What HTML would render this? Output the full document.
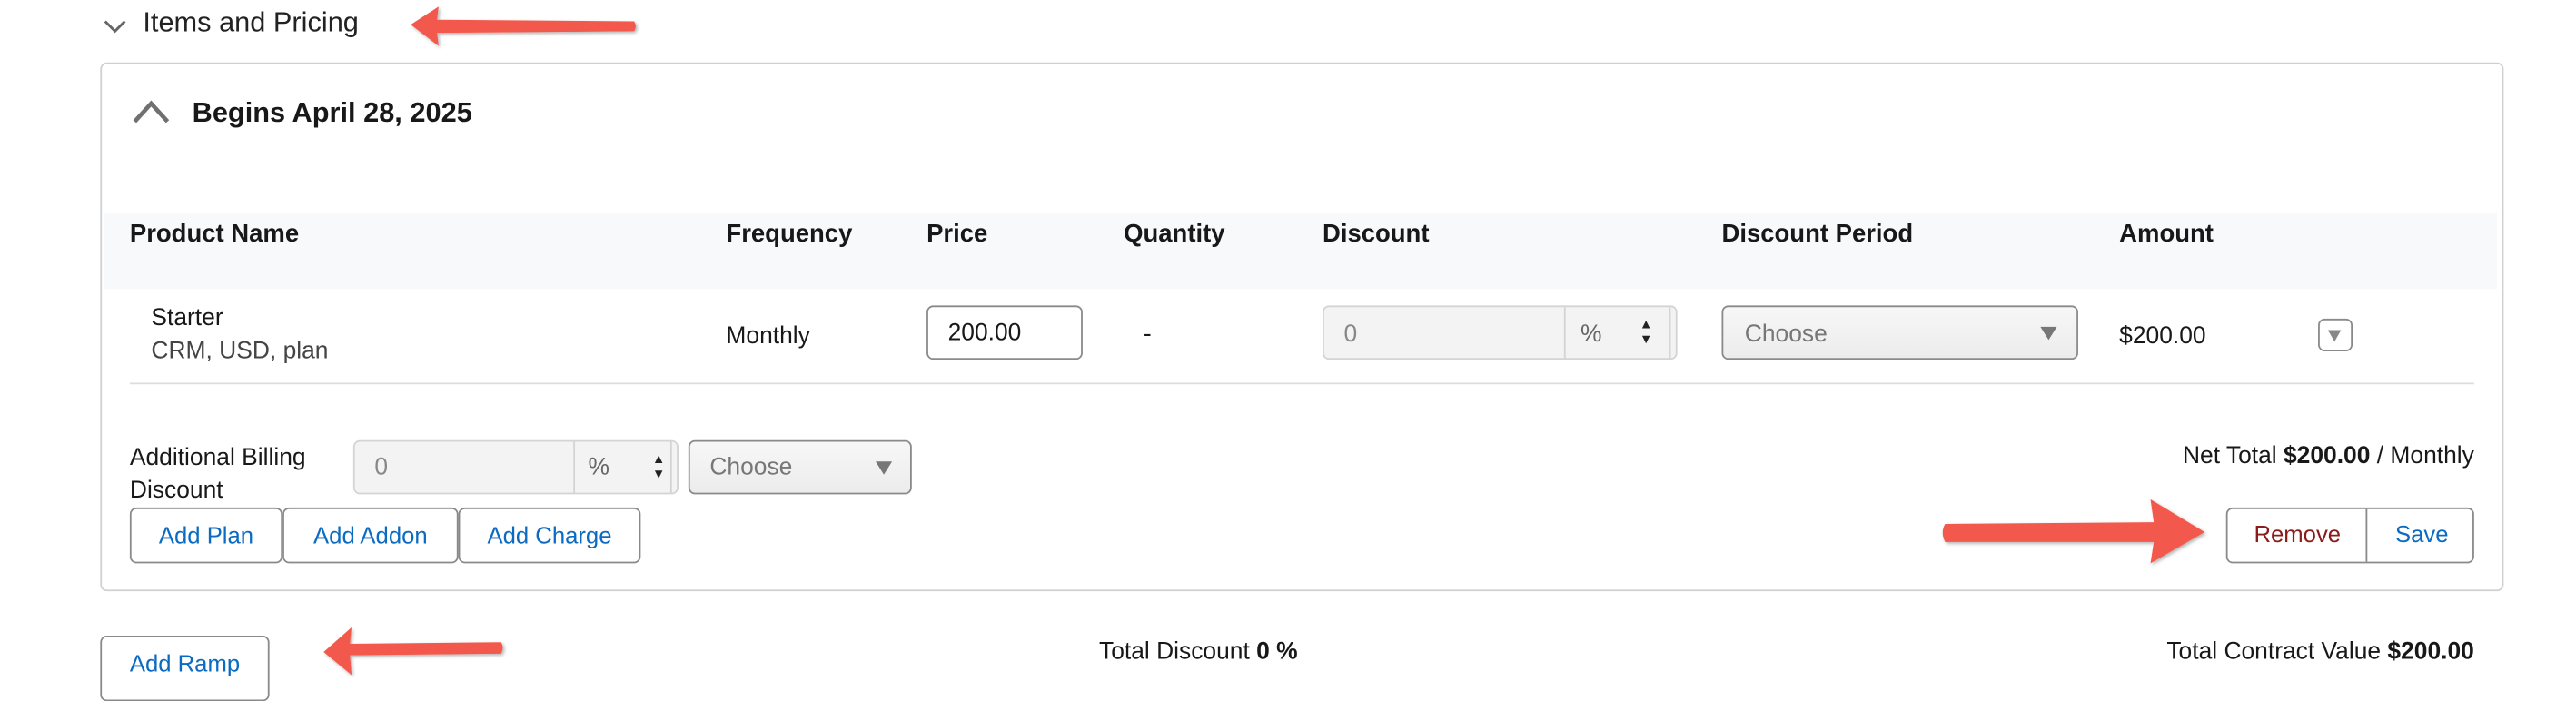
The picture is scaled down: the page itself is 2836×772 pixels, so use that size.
<!DOCTYPE html>
<html><head><meta charset="utf-8"><style>
html,body{margin:0;padding:0;background:#fff;width:2836px;height:750px;overflow:hidden}
#w{position:absolute;left:0;top:0;width:1568px;height:415px;transform:scale(1.80867);transform-origin:0 0;font-family:"Liberation Sans",sans-serif;color:#181818;font-size:14.6px}
.a{position:absolute;white-space:nowrap}
.b{font-weight:bold}
.h{font-weight:bold;font-size:15.2px;top:134px}
.box{position:absolute;box-sizing:border-box;border:1px solid #8a8a8a;border-radius:4px;background:#fff}
.gbox{position:absolute;box-sizing:border-box;border:1px solid #d4d4d4;border-radius:4px;background:#f3f3f3}
.btn{position:absolute;box-sizing:border-box;border:1px solid #8a8a8a;border-radius:4px;background:#fff;color:#0b6bc2;text-align:center;font-size:14.2px}
.sel{position:absolute;box-sizing:border-box;border:1px solid #8a8a8a;border-radius:4px;background:linear-gradient(#f7f7f7,#ececec);color:#777}
.tri{position:absolute;width:0;height:0;border-left:5px solid transparent;border-right:5px solid transparent;border-top:8px solid #777}
</style></head><body><div id="w">
<svg class="a" style="left:62px;top:10px" width="16" height="12"><path d="M2 3 L8 9 L14 3" fill="none" stroke="#666" stroke-width="1.6"/></svg>
<div class="a" style="left:87px;top:4px;font-size:17px;color:#222">Items and Pricing</div>
<svg class="a" style="left:245px;top:2px" width="150" height="28"><g filter="url(#s)"><path d="M5 13 L22 2 L21 10 L141 11 Q143 14 141 17 L21 18 L22 26 Z" fill="#f2594b"/></g><defs><filter id="s"><feDropShadow dx="1" dy="1" stdDeviation="1" flood-opacity=".3"/></filter></defs></svg>

<div style="position:absolute;left:61px;top:38px;width:1463px;height:322px;box-sizing:border-box;border:1px solid #d0d0d0;border-radius:4px"></div>
<svg class="a" style="left:79px;top:59px" width="26" height="18"><path d="M3 15 L13 4 L23 15" fill="none" stroke="#707070" stroke-width="2.6"/></svg>
<div class="a b" style="left:117px;top:59px;font-size:17px">Begins April 28, 2025</div>

<div class="a" style="left:63px;top:130px;width:1457px;height:46px;background:#f8f9fa"></div>
<div class="a h" style="left:79px">Product Name</div>
<div class="a h" style="left:442px">Frequency</div>
<div class="a h" style="left:564px">Price</div>
<div class="a h" style="left:684px">Quantity</div>
<div class="a h" style="left:805px">Discount</div>
<div class="a h" style="left:1048px">Discount Period</div>
<div class="a h" style="left:1290px">Amount</div>

<div class="a" style="left:92px;top:186px">Starter</div>
<div class="a" style="left:92px;top:206px;color:#444">CRM, USD, plan</div>
<div class="a" style="left:442px;top:197px">Monthly</div>
<div class="box" style="left:564px;top:186px;width:95px;height:33px"></div>
<div class="a" style="left:577px;top:195px">200.00</div>
<div class="a" style="left:696px;top:196px">-</div>
<div class="gbox" style="left:805px;top:186px;width:216px;height:33px"></div>
<div class="a" style="left:952px;top:187px;width:1px;height:31px;background:#d4d4d4"></div>
<div class="a" style="left:1016px;top:187px;width:1px;height:31px;background:#d4d4d4"></div>
<div class="a" style="left:818px;top:196px;color:#888">0</div>
<div class="a" style="left:962px;top:196px;color:#666">%</div>
<div class="a" style="left:998px;top:193px;font-size:8px;line-height:9px;color:#222">▲<br>▼</div>
<div class="sel" style="left:1048px;top:186px;width:217px;height:33px"></div>
<div class="a" style="left:1062px;top:196px;color:#777">Choose</div>
<div class="tri" style="left:1242px;top:199px"></div>
<div class="a" style="left:1290px;top:197px">$200.00</div>
<div class="box" style="left:1411px;top:194px;width:21px;height:20px;border-radius:4px"></div>
<div class="tri" style="left:1417px;top:201px;border-width:7px 4px 0 4px;border-top-color:#888"></div>
<div class="a" style="left:79px;top:233px;width:1427px;height:1px;background:#ddd"></div>

<div class="a" style="left:79px;top:269px;line-height:20px">Additional Billing<br>Discount</div>
<div class="gbox" style="left:215px;top:268px;width:198px;height:33px"></div>
<div class="a" style="left:349px;top:269px;width:1px;height:31px;background:#d4d4d4"></div>
<div class="a" style="left:408px;top:269px;width:1px;height:31px;background:#d4d4d4"></div>
<div class="a" style="left:228px;top:277px;color:#888">0</div>
<div class="a" style="left:358px;top:277px;color:#666">%</div>
<div class="a" style="left:397px;top:275px;font-size:8px;line-height:9px;color:#222">▲<br>▼</div>
<div class="sel" style="left:419px;top:268px;width:136px;height:33px"></div>
<div class="a" style="left:432px;top:277px;color:#777">Choose</div>
<div class="tri" style="left:533px;top:281px"></div>
<div class="a" style="right:62px;top:270px">Net Total <b>$200.00</b> / Monthly</div>

<div class="btn" style="left:79px;top:309px;width:93px;height:34px;line-height:34px">Add Plan</div>
<div class="btn" style="left:172px;top:309px;width:107px;height:34px;line-height:34px">Add Addon</div>
<div class="btn" style="left:279px;top:309px;width:111px;height:34px;line-height:34px">Add Charge</div>

<div class="btn" style="left:1355px;top:309px;width:151px;height:34px"></div>
<div class="a" style="left:1440px;top:310px;width:1px;height:32px;background:#8a8a8a"></div>
<div class="a" style="left:1372px;top:318px;color:#8a1c1c;font-size:14.2px">Remove</div>
<div class="a" style="left:1458px;top:318px;color:#0b6bc2;font-size:14.2px">Save</div>
<svg class="a" style="left:1178px;top:301px" width="170" height="46"><g filter="url(#s)"><path d="M6 18 L133 17 L131 3 L164 23 L131 42 L133 29 L6 29 Q3 23 6 18 Z" fill="#f2594b"/></g></svg>

<div class="btn" style="left:61px;top:387px;width:103px;height:40px;line-height:34px">Add Ramp</div>
<svg class="a" style="left:192px;top:378px" width="120" height="38"><g filter="url(#s)"><path d="M5 19 L22 4 L21 14 L113 13 Q115 16 113 20 L21 21 L22 33 Z" fill="#f2594b"/></g></svg>
<div class="a" style="left:669px;top:389px">Total Discount <b>0 %</b></div>
<div class="a" style="right:62px;top:389px">Total Contract Value <b>$200.00</b></div>
</div></body></html>
